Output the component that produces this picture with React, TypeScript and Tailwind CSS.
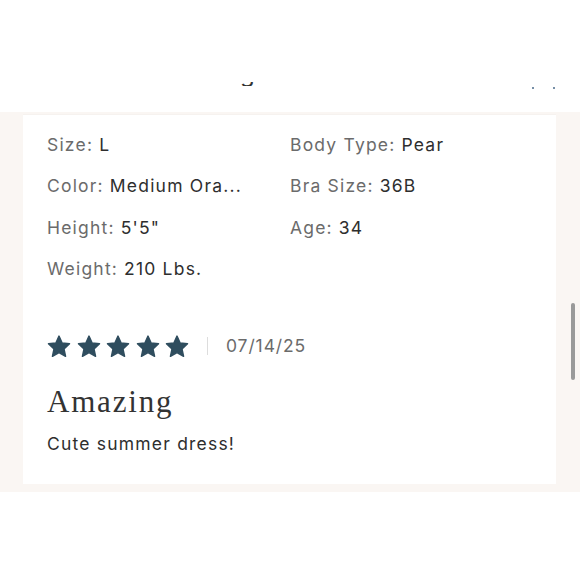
import React from "react";

const Star = () => (
  <svg width="26" height="25" viewBox="0 0 24 24" className="shrink-0">
    <path
      d="M12 2l3 6.6 7.1.8-5.3 4.9 1.5 7.1L12 17.8l-6.3 3.6 1.5-7.1-5.3-4.9 7.1-.8z"
      fill="#2f4d5e"
      stroke="#2f4d5e"
      strokeWidth="1.4"
      strokeLinejoin="round"
    />
  </svg>
);

function Item({ label, value }: { label: string; value: string }) {
  return (
    <div className="h-[41.5px] flex items-center whitespace-nowrap">
      <span className="text-[#6b6b6b]">{label}:</span>
      <span className="text-[#2e2e2e] ml-[6px]">{value}</span>
    </div>
  );
}

export default function App() {
  const font = { fontFamily: "Inter, 'Liberation Sans', sans-serif" };
  return (
    <div className="w-[580px] h-[580px] bg-white relative overflow-hidden" style={font}>
      <div className="h-[112px] relative">
        <span className="absolute left-[240px] top-[62px] text-[24px] text-[#333] leading-none" style={{ clipPath: "inset(20px 0 0 0)" }}>g</span>
        <span className="absolute left-[532px] top-[87px] w-[2px] h-[2px] bg-[#4a6a8a] rounded-full" />
        <span className="absolute left-[553px] top-[87px] w-[2px] h-[2px] bg-[#4a6a8a] rounded-full" />
      </div>
      <div className="bg-[#faf6f3] h-[380px] pl-[23px] pr-[24px] pt-[2px] pb-[8px] flex">
        <div className="bg-white flex-1 pl-[24px] pt-[9px] text-[17.5px] tracking-[1.2px] border-t border-[#f6f2ef]">
          <div className="grid grid-cols-[243px_1fr]">
            <div>
              <Item label="Size" value="L" />
              <Item label="Color" value="Medium Ora..." />
              <Item label="Height" value={"5'5\""} />
              <Item label="Weight" value="210 Lbs." />
            </div>
            <div>
              <Item label="Body Type" value="Pear" />
              <Item label="Bra Size" value="36B" />
              <Item label="Age" value="34" />
            </div>
          </div>
          <div className="flex items-center mt-[41px] h-[30px]">
            <div className="flex gap-[3.5px] -ml-[1px]">
              <Star />
              <Star />
              <Star />
              <Star />
              <Star />
            </div>
            <div className="w-px h-[18px] bg-[#ddd] ml-[17px] mr-[18px]" />
            <span className="text-[#6b6b6b] tracking-[0.9px]">07/14/25</span>
          </div>
          <div
            className="mt-[25px] text-[31px] text-[#333] leading-none tracking-[1.8px]"
            style={{ fontFamily: "'Liberation Serif', serif" }}
          >
            Amazing
          </div>
          <div className="mt-[14px] text-[#2e2e2e]">Cute summer dress!</div>
        </div>
      </div>
      <div className="absolute left-[571px] top-[303px] w-[4px] h-[77px] bg-[#9a9a9a] rounded-full" />
    </div>
  );
}
